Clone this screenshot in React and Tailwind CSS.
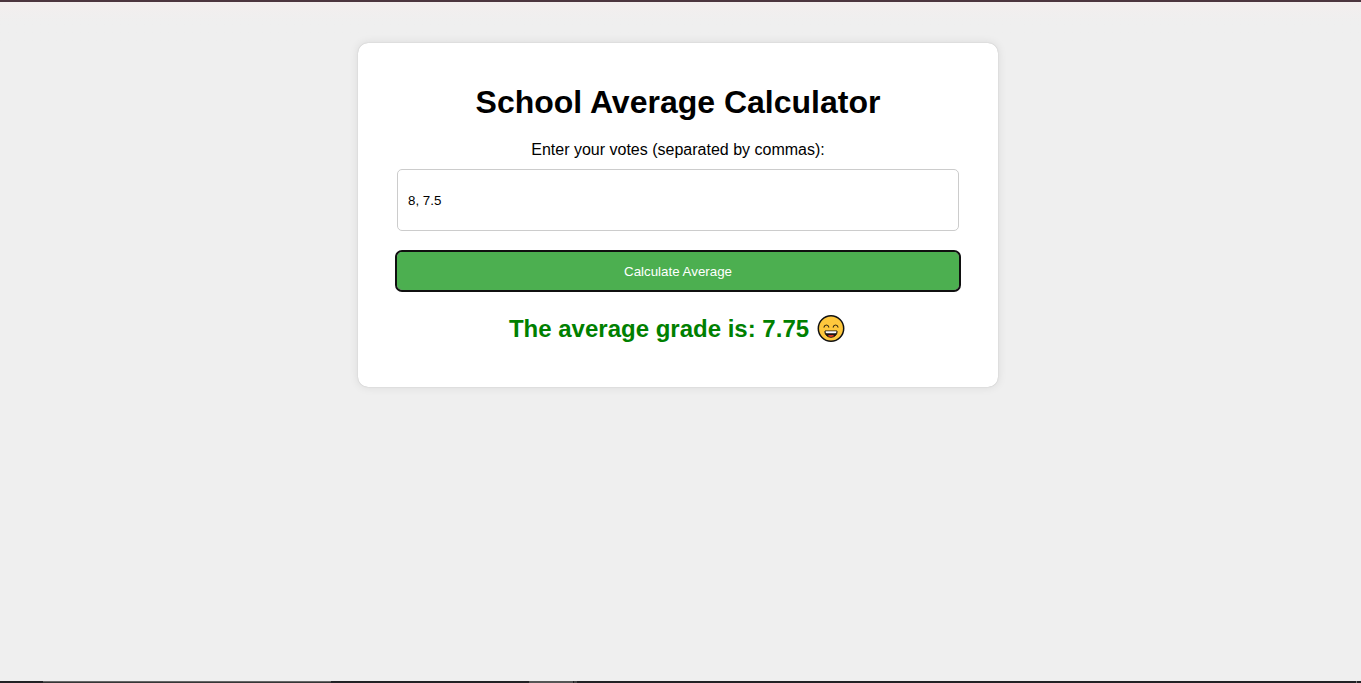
import { useState } from "react";

function GrinningFace() {
  return (
    <svg viewBox="0 0 28 28" className="h-7 w-7 shrink-0" aria-hidden="true">
      <circle cx="14" cy="13.5" r="12.7" fill="#ffc83d" stroke="#111" strokeWidth="1.5" />
      <path d="M7 12.1c.5-2.8 4.3-2.8 4.8 0M16.2 12.1c.5-2.8 4.3-2.8 4.8 0" fill="none" stroke="#3a2c12" strokeWidth="1.1" strokeLinecap="round" />
      <path d="M8 16h12c.4 3.7-2.4 6.2-6 6.2S7.6 19.7 8 16z" fill="#1b1410" stroke="#1b1410" strokeWidth="1" strokeLinejoin="round" />
      <path d="M8.6 16.2h10.8v.9q0 1.2-1.2 1.2H9.8q-1.2 0-1.2-1.2z" fill="#fff" />
      <path d="M10.8 21.1c1.2-1.5 2.2-1.1 3.2-.8 1-.3 2-.7 3.2.8-1.8 1.1-4.6 1.1-6.4 0z" fill="#e6391f" />
    </svg>
  );
}

export default function App() {
  const [votes, setVotes] = useState("8, 7.5");
  return (
    <div className="flex h-[683px] w-full flex-col bg-[#efefef] font-['Liberation_Sans',Arial,sans-serif] text-black">
      <div className="h-0.5 shrink-0 bg-[#4c353e]" />
      <div className="h-10 shrink-0 bg-linear-to-b from-[#f3eeee] to-[#efefef] to-50%" />
      <main className="flex flex-1 items-start pt-px pl-[358px]">
        <section className="flex h-[344px] w-[640px] flex-col items-center rounded-[10px] bg-white px-[39px] pt-[41px] shadow-[0_0_10px_rgba(0,0,0,0.1),0_0_1px_rgba(0,0,0,0.25)]">
          <h1 className="text-[32px] leading-9 font-bold whitespace-nowrap">School Average Calculator</h1>
          <label htmlFor="votes" className="mt-[21px] text-base leading-[18px]">
            Enter your votes (separated by commas):
          </label>
          <input
            id="votes"
            value={votes}
            onChange={(e) => setVotes(e.target.value)}
            className="mt-2.5 h-[62px] w-full rounded-[5px] border border-[#ccc] px-2.5 text-[13.333px] outline-none"
          />
          <button className="mt-[21px] h-[38px] w-full shrink-0 rounded-[5px] bg-[#4caf50] pt-0.5 text-[13.333px] text-white outline-2 outline-[#101010]">
            Calculate Average
          </button>
          <div className="mt-[25px] mr-0.5 flex h-7 items-center gap-2 text-2xl leading-7 font-bold text-[#008000]">
            <span>The average grade is: 7.75</span>
            <GrinningFace />
          </div>
        </section>
      </main>
      <div className="flex h-0.5 shrink-0 bg-[#222225]">
        <div className="ml-[43px] h-0.5 w-[288px] border-t border-[#656565] bg-[#363636]" />
        <div className="ml-[198px] h-0.5 w-11 bg-[#555]" />
        <div className="ml-px h-0.5 w-[3px] bg-[#444]" />
        <div className="mr-1 ml-auto h-0.5 w-px bg-[#777]" />
      </div>
    </div>
  );
}
